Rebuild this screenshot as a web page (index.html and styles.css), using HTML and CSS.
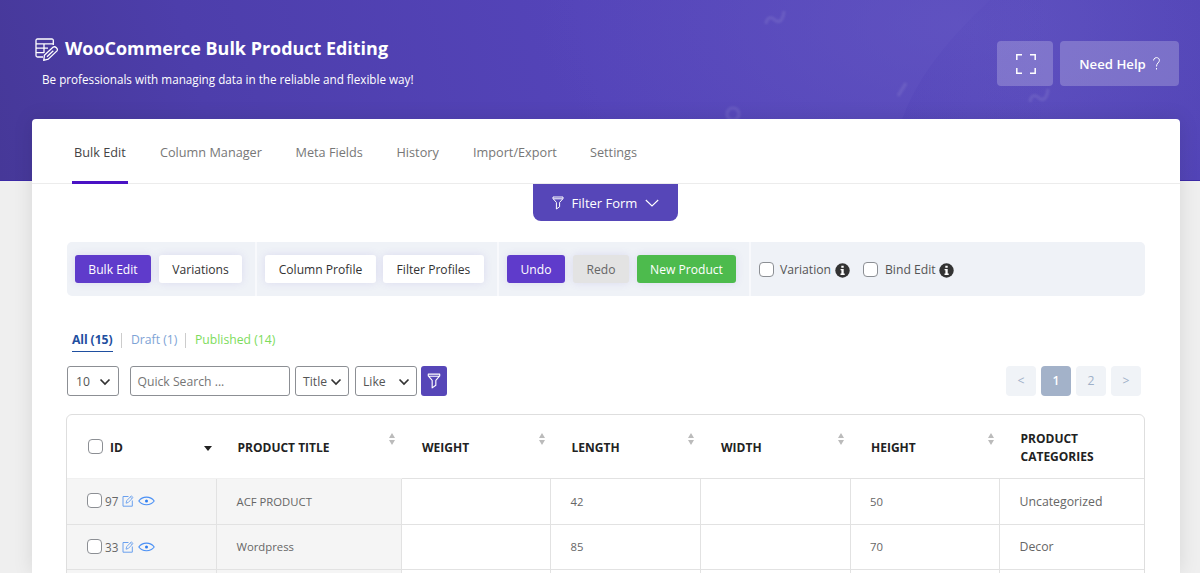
FILE: index.html
```html
<!DOCTYPE html>
<html lang="en">
<head>
<meta charset="utf-8">
<title>WooCommerce Bulk Product Editing</title>
<link rel="stylesheet" href="styles.css">
</head>
<body>
<svg class="defs" width="0" height="0">
  <symbol id="funnel" viewBox="0 0 12 14"><path d="M1 1h10v1.6L7.6 6.4v4.4L4.400 13V6.400L1 2.600z M1.200 2.800h9.600" fill="none" stroke="currentColor" stroke-width="1" stroke-linejoin="round"/></symbol>
  <symbol id="chev" viewBox="0 0 12 8"><path d="M1.500 1.500 6 6l4.500-4.500" fill="none" stroke="currentColor" stroke-width="1.700"/></symbol>
  <symbol id="info" viewBox="0 0 15 15"><circle cx="7.500" cy="7.500" r="7.200" fill="#333"/><path d="M6.300 2.800h2.400v2H6.300zM5.600 6h3.100v4.600h1v1.300H5.500v-1.300h.9V7.300h-.8z" fill="#fff"/></symbol>
  <symbol id="edit" viewBox="0 0 12 12"><path d="M6.500 1.500H1v9.700h9.300V5.500" fill="none" stroke="#6aa0ee" stroke-width="1"/><path d="M4 8.200l.7-2.500L9.300.9l1.700 1.600-4.600 4.900zM8.300 2l1.700 1.600" fill="none" stroke="#6aa0ee" stroke-width=".9"/></symbol>
  <symbol id="eye" viewBox="0 0 17 10"><path d="M.8 5C4.500-.2 12.500-.2 16.200 5 12.500 9.900 4.500 9.900.8 5z" fill="none" stroke="#4a90f5" stroke-width="1.100"/><circle cx="8.500" cy="5" r="1.500" fill="#2f7df0"/></symbol>
  <symbol id="sort" viewBox="0 0 6 12"><path d="M3 0 6 5H0zM3 12 0 7h6z" fill="#bbb"/></symbol>
</svg>
<header class="hero">
  <svg class="hero-art" viewBox="0 0 1200 181" width="1200" height="181" fill="none">
    <defs><linearGradient id="arc" x1="0" y1="0" x2="1" y2="0"><stop offset="0" stop-color="#3f2fae" stop-opacity=".13"/><stop offset=".5" stop-color="#3f2fae" stop-opacity="0"/></linearGradient></defs>
    <path d="M990 0C945 42 915 80 900 125V181H1200V0z" fill="url(#arc)"/>
    <g class="confetti" stroke="#fff" stroke-opacity=".09" stroke-width="3.500">
      <path d="M766 24c1-8 6-7 9-4s8 2 9-9"/><path d="M1030 102c1-8 6-7 9-4s8 2 9-9"/>
      <path d="M898 96l8-13"/><circle cx="733" cy="114" r="6"/>
    </g>
  </svg>
  <div class="brand">
    <div class="brand-row">
      <svg class="logo" viewBox="0 0 24 23" width="24" height="23" fill="none" stroke="#fff" stroke-width="1.300"><path d="M18.300 7V2.500Q18.300 1 16.800 1H2.500Q1 1 1 2.500v15Q1 19 2.500 19H8M1 5.800h17M1 10.200h12M1 14.600h8M9 5.800V15"/><path d="M9.400 17.300l8.800-8.200q1.500-1 3.200.6t.6 3.200l-8.800 8.300-4.400 1.100zM12 18.800l6.300-6"/></svg>
      <h1>WooCommerce Bulk Product Editing</h1>
    </div>
    <p>Be professionals with managing data in the reliable and flexible way!</p>
  </div>
  <div class="hero-actions">
    <button class="hbtn full"><svg width="20" height="20" viewBox="0 0 20 20" fill="none" stroke="#fff" stroke-width="1.500"><path d="M.8 6V.8H6M14 .8h5.200V6M19.200 14v5.200H14M6 19.200H.8V14"/></svg></button>
    <button class="hbtn help">Need Help <svg width="7" height="13" viewBox="0 0 7 13" fill="none" stroke="#fff" stroke-width="1"><path d="M.6 3.500C.6-.3 6.400-.3 6.400 3.300 6.400 6 3.500 5.700 3.500 9.500M3.500 11v1.500"/></svg></button>
  </div>
</header>
<main class="card">
  <nav class="tabs">
    <a class="tab active">Bulk Edit</a><a class="tab t2">Column Manager</a><a class="tab t3">Meta Fields</a><a class="tab t4">History</a><a class="tab t5">Import/Export</a><a class="tab t6">Settings</a>
  </nav>
  <button class="filter-form"><svg width="12" height="14"><use href="#funnel"/></svg><span>Filter Form</span><svg width="14" height="8" viewBox="0 0 14 8"><path d="M.8 1 7 7l6.200-6" fill="none" stroke="#fff" stroke-width="1.100"/></svg></button>
  <section class="toolbar">
    <div class="group g1"><button class="btn purple b1">Bulk Edit</button><button class="btn b2">Variations</button></div>
    <div class="group g2"><button class="btn b3">Column Profile</button><button class="btn b4">Filter Profiles</button></div>
    <div class="group g3"><button class="btn purple b5">Undo</button><button class="btn gray b6">Redo</button><button class="btn green b7">New Product</button></div>
    <div class="group g4"><label class="opt"><i class="check"></i><span class="o1">Variation</span><svg width="15" height="15"><use href="#info"/></svg></label><label class="opt"><i class="check"></i><span class="o2">Bind Edit</span><svg width="15" height="15"><use href="#info"/></svg></label></div>
  </section>
  <div class="views"><a class="all">All (15)</a><i class="sep"></i><a class="draft">Draft (1)</a><i class="sep"></i><a class="pub">Published (14)</a></div>
  <div class="controls">
    <div class="field s1">10<svg width="12" height="8"><use href="#chev"/></svg></div>
    <div class="field search">Quick Search ...</div>
    <div class="field s2">Title<svg width="12" height="8"><use href="#chev"/></svg></div>
    <div class="field s3">Like<svg width="12" height="8"><use href="#chev"/></svg></div>
    <button class="go"><svg width="14" height="16"><use href="#funnel"/></svg></button>
    <div class="pager"><a>&lt;</a><a class="on">1</a><a>2</a><a>&gt;</a></div>
  </div>
  <div class="table">
    <div class="row head">
      <div class="cell"><i class="check"></i><span class="idh">ID</span><b class="down"></b></div>
      <div class="cell">PRODUCT TITLE<svg class="sort" width="6" height="12"><use href="#sort"/></svg></div>
      <div class="cell">WEIGHT<svg class="sort" width="6" height="12"><use href="#sort"/></svg></div>
      <div class="cell">LENGTH<svg class="sort" width="6" height="12"><use href="#sort"/></svg></div>
      <div class="cell">WIDTH<svg class="sort" width="6" height="12"><use href="#sort"/></svg></div>
      <div class="cell">HEIGHT<svg class="sort" width="6" height="12"><use href="#sort"/></svg></div>
      <div class="cell">PRODUCT<br>CATEGORIES</div>
    </div>
    <div class="row">
      <div class="cell fix"><i class="check"></i><span class="id">97</span><svg class="ed" width="12" height="12"><use href="#edit"/></svg><svg width="17" height="10"><use href="#eye"/></svg></div>
      <div class="cell fix"><span class="caps">ACF PRODUCT</span></div><div class="cell"></div><div class="cell">42</div><div class="cell"></div><div class="cell">50</div><div class="cell cat">Uncategorized</div>
    </div>
    <div class="row">
      <div class="cell fix"><i class="check"></i><span class="id">33</span><svg class="ed" width="12" height="12"><use href="#edit"/></svg><svg width="17" height="10"><use href="#eye"/></svg></div>
      <div class="cell fix">Wordpress</div><div class="cell"></div><div class="cell">85</div><div class="cell"></div><div class="cell">70</div><div class="cell cat">Decor</div>
    </div>
    <div class="row stub"><div class="cell fix"></div><div class="cell fix"></div><div class="cell"></div><div class="cell"></div><div class="cell"></div><div class="cell"></div><div class="cell"></div></div>
  </div>
</main>
</body>
</html>
```
FILE: styles.css
```css
* { box-sizing: border-box; }
html, body { height: 573px; overflow: hidden; }
body { margin: 0; background: #efefef; font-family: "Open Sans", "Noto Sans", sans-serif; font-size: 12.2px; color: #444; }
button { font: inherit; border: 0; padding: 0; margin: 0; }
svg { flex: none; display: block; }
.defs { position: absolute; }
h1, p { margin: 0; }

.hero { position: relative; height: 181px; display: flex; justify-content: space-between; padding: 38px 21px 0 35px; border-bottom: 1px solid #3c2aa6;
  background: radial-gradient(ellipse 420px 210px at 960px 25px, rgba(105,93,200,.5), rgba(105,93,200,0)), linear-gradient(75deg, #463898 0%, #4d3eab 18%, #5444b9 50%, #5647b9 80%, #5042b5 100%); }
.hero-art { position: absolute; left: 0; top: 0; }
.confetti { filter: blur(.8px); }
.brand { position: relative; color: #fff; }
.brand-row { display: flex; gap: 6px; align-items: center; height: 23px; }
h1 { font-size: 17.95px; font-weight: 700; line-height: 22px; white-space: nowrap; margin-top: -3px; }
.brand p { margin: 9px 0 0 7px; font-size: 11.7px; line-height: 18px; font-weight: 500; white-space: nowrap; }
.hero-actions { position: relative; display: flex; gap: 7px; padding-top: 3px; }
.hbtn { height: 45px; border-radius: 4px; background: rgba(255,255,255,.22); color: #fff; display: flex; align-items: center; justify-content: center; font-size: 13.2px; font-weight: 600; gap: 7px; }
.full { width: 56px; padding-left: 1px; }
.help { width: 119px; }

.card { position: relative; width: 1148px; height: 454px; margin: -62px 0 0 32px; background: #fff; border-radius: 4px 4px 0 0; box-shadow: 0 0 20px rgba(0,0,0,.1); padding: 0 35px; overflow: hidden; }
.tabs { display: flex; height: 65px; margin: 0 -35px; padding-left: 40px; border-bottom: 1px solid #ececec; font-size: 12.7px; line-height: 67px; color: #777; }
.tab { white-space: nowrap; padding-left: 2px; }
.active { width: 56px; color: #444; height: 65px; border-bottom: 3px solid #4a12c4; }
.t2 { margin-left: 30px; width: 135.5px; } .t3 { width: 101px; } .t4 { width: 76.5px; } .t5 { width: 117px; }
.filter-form { width: 145px; height: 37px; margin: 0 auto; position: relative; left: -1px; background: #5646b8; color: #fff; border-radius: 0 0 8px 8px; display: flex; align-items: center; justify-content: center; gap: 8px; font-size: 13px; font-weight: 500; padding-left: 1px; }

.toolbar { margin-top: 21px; height: 54px; width: 1078px; background: #eff2f7; border-radius: 5px; display: flex; }
.group { display: flex; align-items: center; gap: 8px; padding-left: 8px; border-right: 2px solid #f8f9fc; }
.g1 { width: 190px; } .g2 { width: 242px; gap: 7px; } .g3 { width: 252px; } .g4 { flex: 1; border: 0; gap: 13px; padding: 1px 0 0 8px; }
.btn { height: 28px; border-radius: 3px; background: #fff; color: #333; font-size: 12.1px; box-shadow: 0 0 8px rgba(90,70,190,.13); white-space: nowrap; }
.btn.purple { background: #5f3bcb; color: #fff; font-weight: 500; }
.btn.gray { background: #e3e3e3; color: #666; }
.btn.green { background: #4dbb4d; color: #fff; font-weight: 500; }
.b1 { width: 76px; } .b2 { width: 83px; } .b3 { width: 111px; } .b4 { width: 101px; } .b5 { width: 58px; } .b6 { width: 56px; } .b7 { width: 99px; }
.opt { display: flex; align-items: center; color: #555; }
.opt svg { margin-top: 2px; }
.o1 { width: 55px; margin-left: 6px; } .o2 { width: 54px; margin-left: 7px; }
.check { flex: none; width: 15px; height: 15px; border: 1px solid #8c8f94; border-radius: 4px; background: #fff; margin-bottom: 1px; }

.views { display: flex; align-items: center; margin: 32px 0 0 5px; height: 24px; line-height: 24px; font-size: 12.2px; }
.views a { white-space: nowrap; }
.all { width: 41px; height: 24px; color: #1f4fa0; font-weight: 700; border-bottom: 1.5px solid #1f4fa0; letter-spacing: -.1px; }
.draft { color: #7ea3d6; width: 46px; height: 24px; } .pub { color: #7ddc5c; height: 24px; }
.sep { width: 1px; height: 15px; background: #ccc; margin: 0 9px 0 8px; }

.controls { display: flex; margin-top: 14px; height: 30px; width: 1074px; }
.field { border: 1px solid #8c8f94; border-radius: 3px; padding: 1px 7px 0; display: flex; align-items: center; justify-content: space-between; color: #555; font-size: 12.2px; white-space: nowrap; }
.field svg { color: #333; }
.s1 { width: 52px; padding-left: 8px; } .search { width: 160px; margin: 0 5.5px 0 10.5px; color: #757575; }
.s2 { width: 54px; margin-right: 6px; padding-right: 6px; } .s3 { width: 62px; margin-right: 4px; padding-right: 6px; }
.go { width: 26px; border-radius: 3px; background: #5646b8; color: #fff; display: flex; align-items: center; justify-content: center; }
.pager { margin-left: auto; display: flex; gap: 5px; }
.pager a { width: 30px; border-radius: 4px; background: #f0f3f7; color: #9fb0c8; line-height: 30px; text-align: center; }
.pager .on { background: #a3b2c9; color: #fff; font-weight: 600; }

.table { margin: 18px 0 0 -1px; width: 1079px; border: 1px solid #dedede; border-radius: 6px 6px 0 0; font-size: 11.3px; color: #666; }
.row { display: grid; grid-template-columns: 150px 184.5px 149.5px 149.5px 150px 149.5px 1fr; height: 45.5px; }
.cell { border-right: 1px solid #e2e2e2; border-bottom: 1px solid #e2e2e2; padding-left: 19.5px; display: flex; align-items: center; }
.cell:first-child { padding-left: 20px; }
.cell:last-child { border-right: 0; }
.cat { font-size: 12.3px; }
.fix { background: #f5f5f5; }
.stub { height: 4px; }
.head { height: 64px; color: #222; font-weight: 700; font-size: 12px; line-height: 18px; }
.head .cell { border-right: 0; padding: 2px 0 0 20.5px; position: relative; }
.head .cell:first-child { padding-left: 21px; }
.head .cell:first-child, .head .cell:nth-child(2) { border-bottom-color: #f0f0f0; }
.head .check { margin-right: 7px; margin-bottom: 3px; }
.idh { font-size: 12px; }
.down { margin: 1px 5px 0 auto; border: 4px solid transparent; border-top: 5px solid #222; border-bottom: 0; }
.sort { position: absolute; right: 6.5px; top: 18px; }
.id { width: 14px; margin: 0 3px 0 3px; font-size: 11.7px; }
.ed { margin-right: 4px; }
```
